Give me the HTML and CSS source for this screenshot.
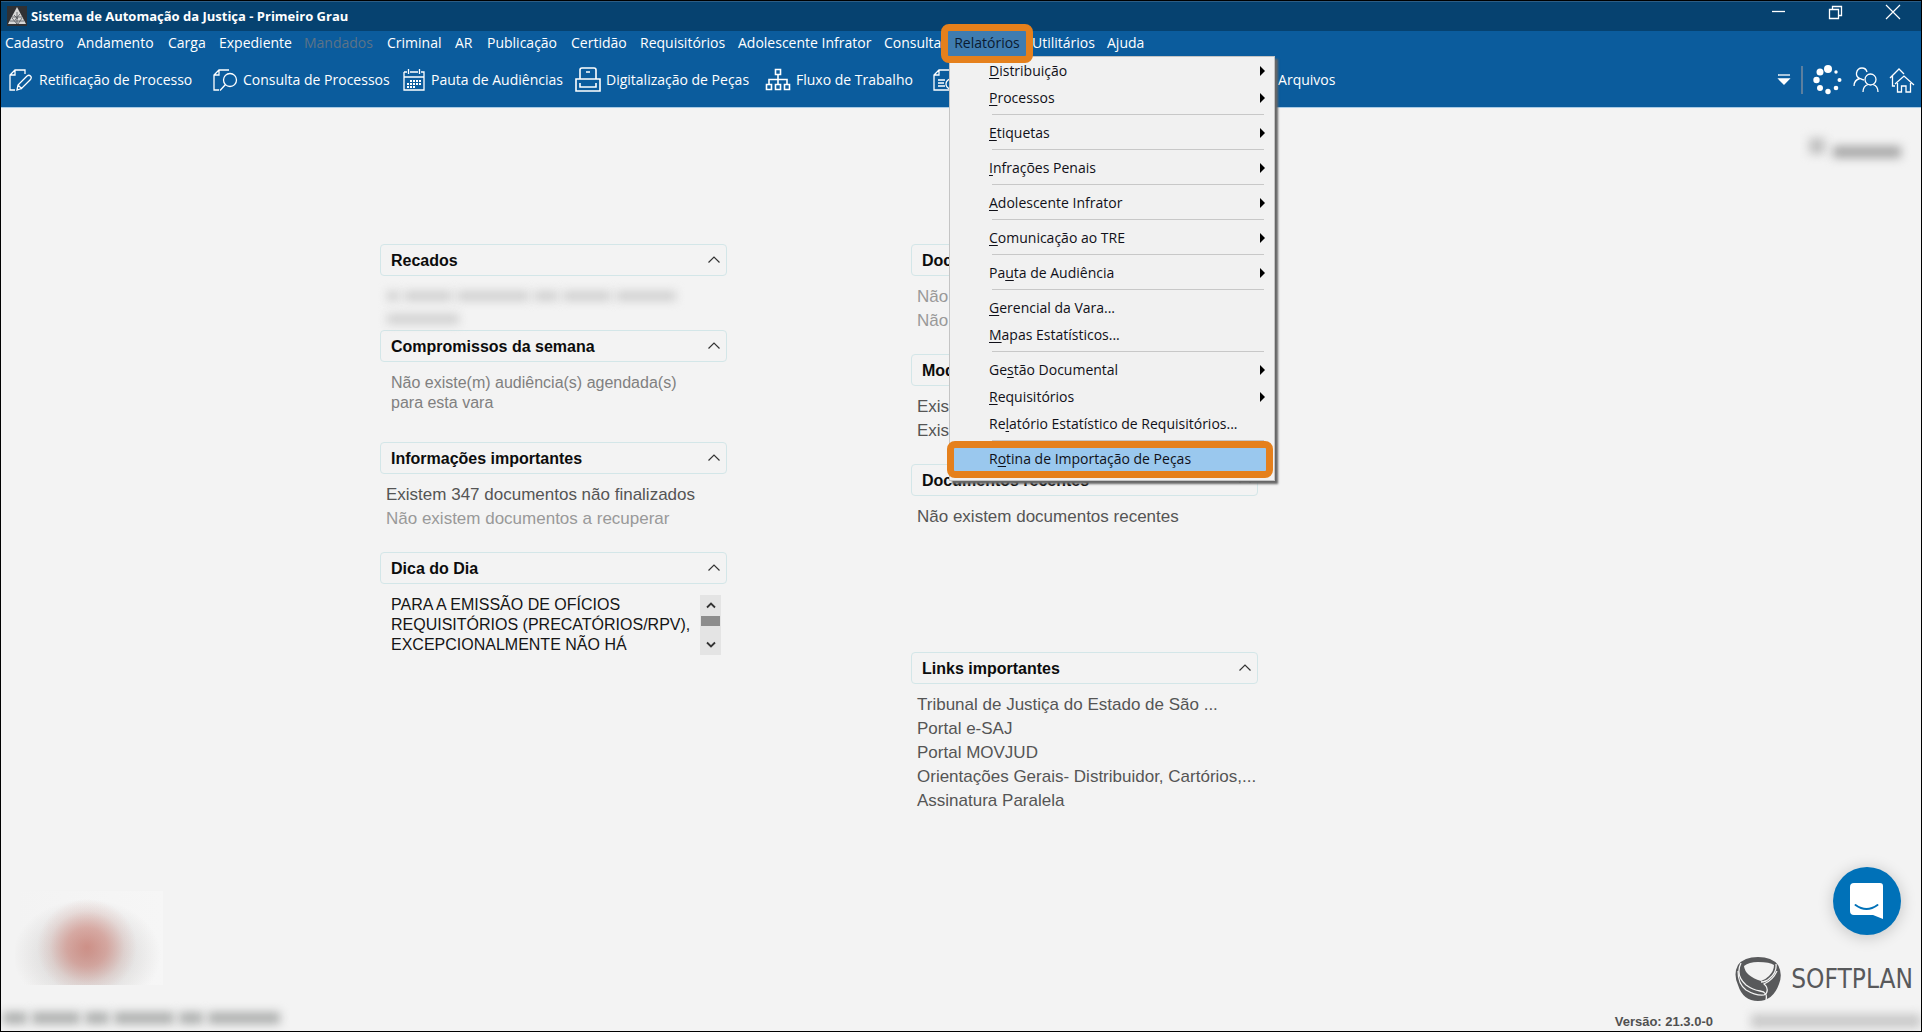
FILE: index.html
```html
<!DOCTYPE html>
<html lang="pt-BR">
<head>
<meta charset="utf-8">
<title>Sistema de Automação da Justiça - Primeiro Grau</title>
<link rel="stylesheet" href="styles.css">
</head>
<body>
<svg class="symbols" aria-hidden="true">
  <symbol id="chevron" viewBox="0 0 12 7"><path d="M0.5 6.500 6 1l5.500 5.500" fill="none" stroke="currentColor" stroke-width="1.200"/></symbol>
</svg>

<header class="chrome">
  <div class="titlebar">
    <svg class="app-icon" viewBox="0 0 20 20" aria-hidden="true"><rect width="20" height="20" fill="#303134"/><path d="M10 1 19 18H1z" fill="#d8d8d8"/><path d="M10 6v12M7 9l4 4M5 12l5 6M13 8l-5 6M15 12l-4 6M3 15h14M5 11h10" stroke="#54575c" stroke-width="0.800"/></svg>
    <span class="app-title">Sistema de Automação da Justiça - Primeiro Grau</span>
    <div class="window-controls">
      <button class="win-btn" aria-label="Minimizar"><svg width="16" height="16" viewBox="0 0 16 16"><path d="M1 7.500h13" stroke="#fff" stroke-width="1.300"/></svg></button>
      <button class="win-btn" aria-label="Restaurar"><svg width="16" height="16" viewBox="0 0 16 16"><path d="M1.500 5.500h9v9h-9zM4.500 5V2.500h9v9H11" fill="none" stroke="#fff" stroke-width="1.300"/></svg></button>
      <button class="win-btn" aria-label="Fechar"><svg width="16" height="16" viewBox="0 0 16 16"><path d="m1 1 14 14M15 1 1 15" stroke="#fff" stroke-width="1.200"/></svg></button>
    </div>
  </div>

  <nav class="menubar" aria-label="Menu principal">
    <button>Cadastro</button>
    <button>Andamento</button>
    <button>Carga</button>
    <button>Expediente</button>
    <button disabled>Mandados</button>
    <button>Criminal</button>
    <button>AR</button>
    <button>Publicação</button>
    <button>Certidão</button>
    <button>Requisitórios</button>
    <button>Adolescente Infrator</button>
    <button>Consulta</button>
    <div class="menu-open">
      <button class="menu-current marked" aria-expanded="true">Relatórios</button>
      <div class="dropdown" role="menu">
        <button class="sub" role="menuitem"><u>D</u>istribuição</button>
        <button class="sub" role="menuitem"><u>P</u>rocessos</button>
        <hr>
        <button class="sub" role="menuitem"><u>E</u>tiquetas</button>
        <hr>
        <button class="sub" role="menuitem"><u>I</u>nfrações Penais</button>
        <hr>
        <button class="sub" role="menuitem"><u>A</u>dolescente Infrator</button>
        <hr>
        <button class="sub" role="menuitem"><u>C</u>omunicação ao TRE</button>
        <hr>
        <button class="sub" role="menuitem">Pa<u>u</u>ta de Audiência</button>
        <hr>
        <button role="menuitem"><u>G</u>erencial da Vara...</button>
        <button role="menuitem"><u>M</u>apas Estatísticos...</button>
        <hr>
        <button class="sub" role="menuitem">Ge<u>s</u>tão Documental</button>
        <button class="sub" role="menuitem"><u>R</u>equisitórios</button>
        <button role="menuitem">Re<u>l</u>atório Estatístico de Requisitórios...</button>
        <hr>
        <button class="selected marked" role="menuitem">R<u>o</u>tina de Importação de Peças</button>
      </div>
    </div>
    <button>Utilitários</button>
    <button>Ajuda</button>
  </nav>

  <div class="toolbar">
    <div class="tools">
      <button><svg width="24" height="24" viewBox="0 0 24 24"><path d="M17 6V2H7L2 7v15h5M2 7h5V2M9 22l1-5 9-9q2-1.500 3.500 0t0 3.500l-9 9zM10 17l4 4"/></svg>Retificação de Processo</button>
      <button><svg width="26" height="24" viewBox="0 0 26 24"><path d="M17 2H7L2 7v15h5M2 7h5V2M13.500 16.500 8 22.500"/><circle cx="18" cy="12" r="6.500"/></svg>Consulta de Processos</button>
      <button><svg width="24" height="24" viewBox="0 0 24 24"><path d="M2 4h3m3 0h8m3 0h3v18H2V4M2 9h20M6.500 1v5M17.500 1v5"/><path d="M8 13h11M5 16h14M5 19h9" stroke-width="2" stroke-dasharray="2 1"/></svg>Pauta de Audiências</button>
      <button><svg width="26" height="26" viewBox="0 0 26 26"><path d="M5 12V3q0-2 2-2h12q2 0 2 2v9M5 12H1v12h24V12h-4M5 12h16M11 5h4M5 16v4h16v-4" stroke-width="1.600"/></svg>Digitalização de Peças</button>
      <button><svg width="26" height="24" viewBox="0 0 26 24"><path d="M10.500 1.500h5v5h-5zM1.500 16.500h5v5h-5zM10.500 16.500h5v5h-5zM19.500 16.500h5v5h-5zM13 6.500v10M4 16.500v-5h18v5" stroke-width="1.600"/></svg>Fluxo de Trabalho</button>
      <button aria-label="Documentos"><svg width="24" height="24" viewBox="0 0 24 24"><path d="M18 5V2H6L1 7v15h16M1 7h5V2M5 12h7M5 15h6M5 18h7"/><circle cx="18" cy="16" r="5"/></svg></button>
      <button>de Arquivos</button>
    </div>
    <div class="quick">
      <button aria-label="Mais opções"><svg width="14" height="14" viewBox="0 0 14 14"><path d="M1 2h12"/><path d="M2 6h10l-5 5z" fill="#fff"/></svg></button>
      <span class="divider"></span>
      <button aria-label="Sincronizar"><svg width="30" height="30" viewBox="0 0 30 30"><g fill="#fff" stroke="none"><circle cx="15" cy="4" r="4"/><circle cx="7" cy="7" r="3.500"/><circle cx="3.500" cy="15" r="3.200"/><circle cx="7" cy="23" r="3"/><circle cx="15" cy="26.500" r="2.700"/><circle cx="23" cy="23" r="2.300"/><circle cx="26.500" cy="15" r="2"/><circle cx="23" cy="7" r="1.700"/></g></svg></button>
      <button aria-label="Usuários"><svg width="26" height="26" viewBox="0 0 26 26"><path d="M1 19q0-6 6-7.500Q3 10 3.500 6 4.500 1 9 1q4 0 5 4M7 11.500q2 1 4 1.500"/><circle cx="17.500" cy="12.500" r="5.500"/><path d="M10 25q0-6 5-7.500M25 25q0-6-5-7.500"/></svg></button>
      <button aria-label="Início"><svg width="26" height="26" viewBox="0 0 26 26"><path d="M1 11 10 2l5 5M3.500 9v10H6M6 17l9-8 10 9M8.500 16v9h4v-6h4.500v6h4.500v-9"/></svg></button>
    </div>
  </div>
</header>

<main>
  <div class="user-strip" aria-hidden="true"><i class="smudge avatar"></i><i class="smudge name"></i></div>

  <div class="board">
    <div class="column left">
      <section class="card tight">
        <h2>Recados<button aria-label="Recolher"><svg><use href="#chevron"/></svg></button></h2>
        <div class="redacted" aria-hidden="true">
          <i class="smudge w12"></i><i class="smudge w48"></i><i class="smudge w72"></i><i class="smudge w24"></i><i class="smudge w48"></i><i class="smudge w60"></i><i class="smudge w72"></i>
        </div>
      </section>
      <section class="card">
        <h2>Compromissos da semana<button aria-label="Recolher"><svg><use href="#chevron"/></svg></button></h2>
        <p class="note">Não existe(m) audiência(s) agendada(s)<br>para esta vara</p>
      </section>
      <section class="card">
        <h2>Informações importantes<button aria-label="Recolher"><svg><use href="#chevron"/></svg></button></h2>
        <ul>
          <li><a href="#">Existem 347 documentos não finalizados</a></li>
          <li class="muted">Não existem documentos a recuperar</li>
        </ul>
      </section>
      <section class="card">
        <h2>Dica do Dia<button aria-label="Recolher"><svg><use href="#chevron"/></svg></button></h2>
        <div class="tip">
          <p>PARA A EMISSÃO DE OFÍCIOS<br>REQUISITÓRIOS (PRECATÓRIOS/RPV),<br>EXCEPCIONALMENTE NÃO HÁ</p>
          <div class="scroller">
            <button aria-label="Rolar para cima"><svg viewBox="0 0 10 7"><path d="M1 5.500 5 1.500l4 4"/></svg></button>
            <span class="thumb"></span>
            <button class="down" aria-label="Rolar para baixo"><svg viewBox="0 0 10 7"><path d="m1 1.500 4 4 4-4"/></svg></button>
          </div>
        </div>
      </section>
    </div>

    <div class="column right">
      <section class="card">
        <h2>Documentos<button aria-label="Recolher"><svg><use href="#chevron"/></svg></button></h2>
        <ul>
          <li class="muted">Não</li>
          <li class="muted">Não</li>
        </ul>
      </section>
      <section class="card">
        <h2>Modelos<button aria-label="Recolher"><svg><use href="#chevron"/></svg></button></h2>
        <ul>
          <li><a href="#">Exis</a></li>
          <li><a href="#">Exis</a></li>
        </ul>
      </section>
      <section class="card recent">
        <h2>Documentos recentes<button aria-label="Recolher"><svg><use href="#chevron"/></svg></button></h2>
        <ul>
          <li>Não existem documentos recentes</li>
        </ul>
      </section>
      <section class="card">
        <h2>Links importantes<button aria-label="Recolher"><svg><use href="#chevron"/></svg></button></h2>
        <ul>
          <li><a href="#">Tribunal de Justiça do Estado de São ...</a></li>
          <li><a href="#">Portal e-SAJ</a></li>
          <li><a href="#">Portal MOVJUD</a></li>
          <li><a href="#">Orientações Gerais- Distribuidor, Cartórios,...</a></li>
          <li><a href="#">Assinatura Paralela</a></li>
        </ul>
      </section>
    </div>
  </div>
</main>

<footer>
  <div class="court" aria-hidden="true">
    <div class="crest"></div>
    <div class="court-name"><i class="smudge w24"></i><i class="smudge w48"></i><i class="smudge w24"></i><i class="smudge w60"></i><i class="smudge w24"></i><i class="smudge w72"></i></div>
  </div>
  <div class="vendor">
    <div class="brand">
      <svg width="46" height="44" viewBox="0 0 46 44" aria-hidden="true">
        <path d="M3 8Q9 0 23 0t20 8q5 9 1 19-6 17-21 17T3 28Q-2 17 3 8z" fill="#58595b"/>
        <path d="M9 9q5-4 14-4 12 0 16 3 0 6-5 11-4 4-8 5Q10 19 9 9z" fill="#f2f2f2"/>
        <path d="M6 6q-6 12 5 22 7 5 14 6 8 1 6 9M41 7q1 8-6 14-4 4-9 4" fill="none" stroke="#f2f2f2" stroke-width="1.300"/>
        <path d="M42 14q-4 9-13 13 4 3 3 8M3 14q0 13 8 19 10 6 18 5 3-1 3-4" fill="none" stroke="#f2f2f2" stroke-width="1.200"/>
      </svg>
      <span>SOFTPLAN</span>
    </div>
    <div class="version-row"><span>Versão: 21.3.0-0</span><i class="smudge session" aria-hidden="true"></i></div>
  </div>
</footer>

<button class="chat" aria-label="Abrir conversa"><svg width="34" height="36" viewBox="0 0 34 36"><path d="M4 0h26q3 0 3 3v33l-10-4H4q-4 0-4-4V4q0-4 4-4z" fill="#fff"/><path d="M5.500 22q11 8 22 0" fill="none" stroke="#0071b8" stroke-width="2" stroke-linecap="round"/></svg></button>
</body>
</html>
```

FILE: styles.css
```css
* { box-sizing: border-box; }

body {
  display: flex;
  flex-direction: column;
  min-height: 100vh;
  margin: 0;
  border: 1px solid #000;
  background: #f3f3f3;
  color: #555;
  font: 16px/20px "Liberation Sans", Arial, sans-serif;
}

button {
  padding: 0;
  border: 0;
  background: none;
  color: inherit;
  font: inherit;
  text-align: left;
  white-space: nowrap;
}

a { color: inherit; text-decoration: none; }
.symbols { position: absolute; width: 0; height: 0; }

/* Title bar, menu and toolbar */
.chrome {
  background: #0b5c9d;
  border-bottom: 1px solid #a9cbe6;
  color: #fff;
  font: 14px/20px "Open Sans", "Noto Sans", sans-serif;
}

.titlebar {
  display: flex;
  align-items: center;
  gap: 4px;
  height: 30px;
  padding: 0 0 2px 6px;
  border-top: 1px solid #2c5d85;
  background: #064270;
}

.app-icon { width: 20px; height: 20px; }
.app-title { font-size: 13px; font-weight: 700; }
.window-controls { display: flex; align-self: flex-start; margin-left: auto; }
.win-btn { width: 57px; height: 20px; display: grid; place-items: center; }

.menubar {
  display: grid;
  grid-template-columns: 72px 91px 51px 85px 83px 68px 32px 84px 69px 98px 146px 64px 78px 75px auto;
  justify-content: start;
  height: 25px;
  padding-left: 4px;
}

.menubar > button { padding-bottom: 2px; }
.menubar > button:disabled { color: #5d7387; }
.menu-open { position: relative; }
.menu-open ~ button { padding-left: 6px; }

.menu-current {
  width: 100%;
  height: 25px;
  padding-bottom: 2px;
  background: #3f7cb0;
  color: #0a1a30;
  text-align: center;
}

.marked { position: relative; }

.marked::after {
  content: "";
  position: absolute;
  inset: -7px;
  z-index: 3;
  border: 7px solid #e5801c;
  border-radius: 8px;
}

.dropdown {
  position: absolute;
  top: 25px;
  left: 1px;
  z-index: 2;
  display: flex;
  flex-direction: column;
  width: 326px;
  padding-bottom: 8px;
  border: 1px solid #c4c4c4;
  background: #f1f1f1;
  box-shadow: 3px 3px 2px #666;
  color: #101018;
}

.menu-current { z-index: 3; }

.dropdown button {
  height: 27px;
  padding-left: 39px;
}

.dropdown u { text-underline-offset: 2px; }

.dropdown .sub {
  display: flex;
  align-items: center;
  padding-right: 9px;
}

.dropdown .sub::after {
  content: "";
  margin-left: auto;
  border: 5px solid transparent;
  border-left-color: #000;
  border-right: 0;
}

.dropdown hr {
  width: 272px;
  height: 1px;
  margin: 3px 0 4px 42px;
  border: 0;
  background: #c8c8c8;
}

.dropdown .selected { background: #9ac8ee; margin: 0 4px; padding-left: 35px; }
.selected.marked::after { inset: -4px -3px -6px -7px; }

.toolbar {
  display: flex;
  justify-content: space-between;
  align-items: flex-start;
  height: 51px;
  padding: 9px 6px 0 7px;
}

.tools {
  display: grid;
  grid-template-columns: 204px 190px 173px 190px 168px 325px auto;
}

.tools button { display: flex; align-items: center; gap: 5px; height: 30px; }
.tools button:nth-child(1) { gap: 7px; }
.toolbar svg { fill: none; stroke: #fff; stroke-width: 1.3; }
.quick { display: flex; align-items: center; gap: 10px; }
.quick button { display: grid; }
.divider { width: 2px; height: 28px; background: #5c7f9f; }

/* Dashboard */
main { flex: 1; }

.user-strip {
  display: flex;
  justify-content: flex-end;
  gap: 8px;
  height: 136px;
  padding: 30px 20px 0 0;
}

.smudge { display: block; height: 10px; background: #c2c2c2; filter: blur(5px); }
.avatar { width: 16px; height: 16px; }
.name { width: 68px; height: 12px; margin-top: 8px; background: #a8a8a8; }
.w12 { width: 12px; }
.w24 { width: 24px; }
.w48 { width: 48px; }
.w60 { width: 60px; }
.w72 { width: 72px; }

.board {
  display: grid;
  grid-template-columns: 379fr 347fr 184fr 347fr 663fr;
}

.left { grid-column: 2; }
.right { grid-column: 4; }
.card { margin-bottom: 21px; }
.card.tight { margin-bottom: 3px; }
.card.recent { min-height: 167px; }

.card h2 {
  display: flex;
  justify-content: space-between;
  align-items: center;
  height: 32px;
  margin: 0;
  padding: 1px 6px 0 10px;
  border: 1px solid #d3e6e8;
  border-radius: 4px;
  color: #0c0c0c;
  font-size: 16px;
}

.card h2 button { display: grid; padding-bottom: 3px; color: #333; }
.card h2 svg { width: 12px; height: 7px; }
.card ul { margin: 0; padding: 9px 0 0 6px; list-style: none; font-size: 17px; }
.card li { line-height: 24px; white-space: nowrap; }
.muted { color: #999; }
.note { margin: 0; padding: 11px 0 8px 11px; color: #808080; }

.redacted {
  display: flex;
  flex-wrap: wrap;
  gap: 10px 5px;
  width: 320px;
  padding: 15px 0 0 7px;
  height: 51px;
}

.redacted .smudge { background: #d0d0d0; }
.tip { display: flex; justify-content: space-between; padding: 11px 6px 0 11px; color: #151515; }
.tip p { margin: 0; white-space: nowrap; }

.scroller {
  display: flex;
  flex-direction: column;
  align-items: center;
  width: 21px;
  height: 60px;
  background: #e4e4e4;
}

.scroller button { display: grid; place-items: center; width: 21px; height: 21px; }
.scroller svg { width: 10px; height: 7px; fill: none; stroke: #333; stroke-width: 1.8; }
.scroller .down { margin-top: auto; }
.thumb { width: 19px; height: 10px; background: #8c8c8c; }

/* Footer */
footer { display: flex; justify-content: space-between; align-items: flex-end; }

.crest {
  width: 148px;
  height: 94px;
  margin: 0 0 19px 14px;
  background:
    radial-gradient(ellipse 50px 48px at 72px 56px, rgb(204 118 106 / 70%), rgb(208 120 108 / 50%) 40%, rgb(208 130 118 / 15%) 75%, transparent),
    radial-gradient(ellipse 74px 56px at 72px 64px, rgb(160 155 152 / 50%), rgb(175 170 168 / 25%) 60%, transparent),
    linear-gradient(90deg, transparent, #f6f6f6);
}

.court-name {
  display: flex;
  gap: 5px;
  padding: 8px 0 7px 2px;
}

.court-name .smudge { height: 12px; background: #aeb0af; }

.brand {
  display: flex;
  align-items: center;
  justify-content: flex-end;
  gap: 10px;
  padding-right: 8px;
  color: #58595b;
  font: 26px/44px "DejaVu Sans Condensed", "Liberation Sans", sans-serif;
}

.version-row {
  display: flex;
  gap: 38px;
  height: 30px;
  padding-top: 11px;
  color: #505050;
  font-size: 13px;
  font-weight: 700;
}

.session { width: 170px; height: 14px; margin-top: 2px; background: #cacaca; }

.chat {
  position: fixed;
  right: 21px;
  bottom: 97px;
  display: grid;
  place-items: center;
  width: 68px;
  height: 68px;
  border-radius: 50%;
  background: #0071b8;
  box-shadow: 0 2px 16px rgb(0 0 0 / 20%);
}
```
